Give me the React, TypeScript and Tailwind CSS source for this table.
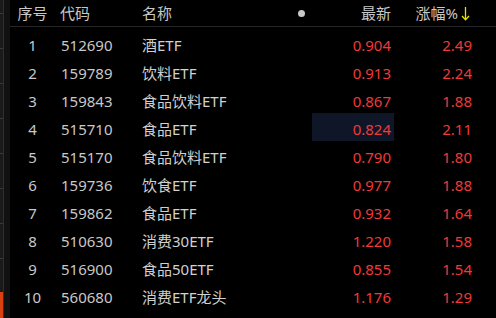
import React from 'react';

interface Row {
  code: string;
  name: string;
  price: string;
  change: string;
}

const rows: Row[] = [
  { code: '512690', name: '酒ETF', price: '0.904', change: '2.49' },
  { code: '159789', name: '饮料ETF', price: '0.913', change: '2.24' },
  { code: '159843', name: '食品饮料ETF', price: '0.867', change: '1.88' },
  { code: '515710', name: '食品ETF', price: '0.824', change: '2.11' },
  { code: '515170', name: '食品饮料ETF', price: '0.790', change: '1.80' },
  { code: '159736', name: '饮食ETF', price: '0.977', change: '1.88' },
  { code: '159862', name: '食品ETF', price: '0.932', change: '1.64' },
  { code: '510630', name: '消费30ETF', price: '1.220', change: '1.58' },
  { code: '516900', name: '食品50ETF', price: '0.855', change: '1.54' },
  { code: '560680', name: '消费ETF龙头', price: '1.176', change: '1.29' },
];

const ticks = [0, 1, 2, 3, 4, 5, 6, 7];

export default function App() {
  return (
    <div className="w-[496px] h-[318px] bg-black flex overflow-hidden font-['Noto_Sans','Noto_Sans_CJK_SC',sans-serif] text-[15px]">
      {/* left gutter */}
      <div className="flex h-full">
        <div className="w-[3px] h-full bg-[#1a1a1a] flex flex-col justify-between">
          <div className="flex flex-col gap-[34px] pt-[13px]">
            {ticks.map(t => (
              <div key={t} className="h-[1px] bg-[#3a3a3a]" />
            ))}
          </div>
          <div className="h-[26px] bg-[#d9410e]" />
        </div>
        <div className="w-[1px] h-full bg-[#2e2e2e]" />
        <div className="w-[6px] h-full bg-[#111111]" />
      </div>

      <div className="flex-1 flex flex-col">
        <div className="h-[26px] flex items-center text-[#c8c8c8] border-b border-[#262626] box-content">
          <div className="w-[45px] text-center">序号</div>
          <div className="w-[87px] pl-[5px]">代码</div>
          <div className="w-[170px] flex items-center justify-between pr-[7px]">
            <span>名称</span>
            <span className="w-[7px] h-[7px] rounded-full bg-[#c8c8c8]" />
          </div>
          <div className="w-[82px] text-right pr-[3px]">最新</div>
          <div className="w-[78px] flex items-center justify-end pr-[2px]">
            <span>涨幅%</span>
            <svg className="ml-[3px]" width="9" height="15" viewBox="0 0 9 15">
              <path d="M4.5 1 V13.5" stroke="#e8e000" strokeWidth="1.3" fill="none" />
              <path d="M1 10 L4.5 13.8 L8 10" stroke="#e8e000" strokeWidth="1.3" fill="none" />
            </svg>
          </div>
        </div>

        <div className="mt-[2px] flex flex-col">
          {rows.map((r, i) => (
            <div key={r.code} className="h-[28px] flex leading-[20px]">
              <div className="w-[45px] text-center pt-[6px] text-[#c8c8c8]">{i + 1}</div>
              <div className="w-[87px] pl-[6px] pt-[6px] text-[#c8c8c8]">{r.code}</div>
              <div className="w-[170px] pt-[6px] text-[#d0d0d0]">{r.name}</div>
              <div className={`w-[82px] text-right pr-[3px] pt-[6px] text-[#ee3a3a] ${i === 3 ? 'bg-[#0f1628]' : ''}`}>
                {r.price}
              </div>
              <div className="w-[78px] text-right pt-[6px] text-[#ee3a3a]">{r.change}</div>
            </div>
          ))}
        </div>
      </div>
    </div>
  );
}
